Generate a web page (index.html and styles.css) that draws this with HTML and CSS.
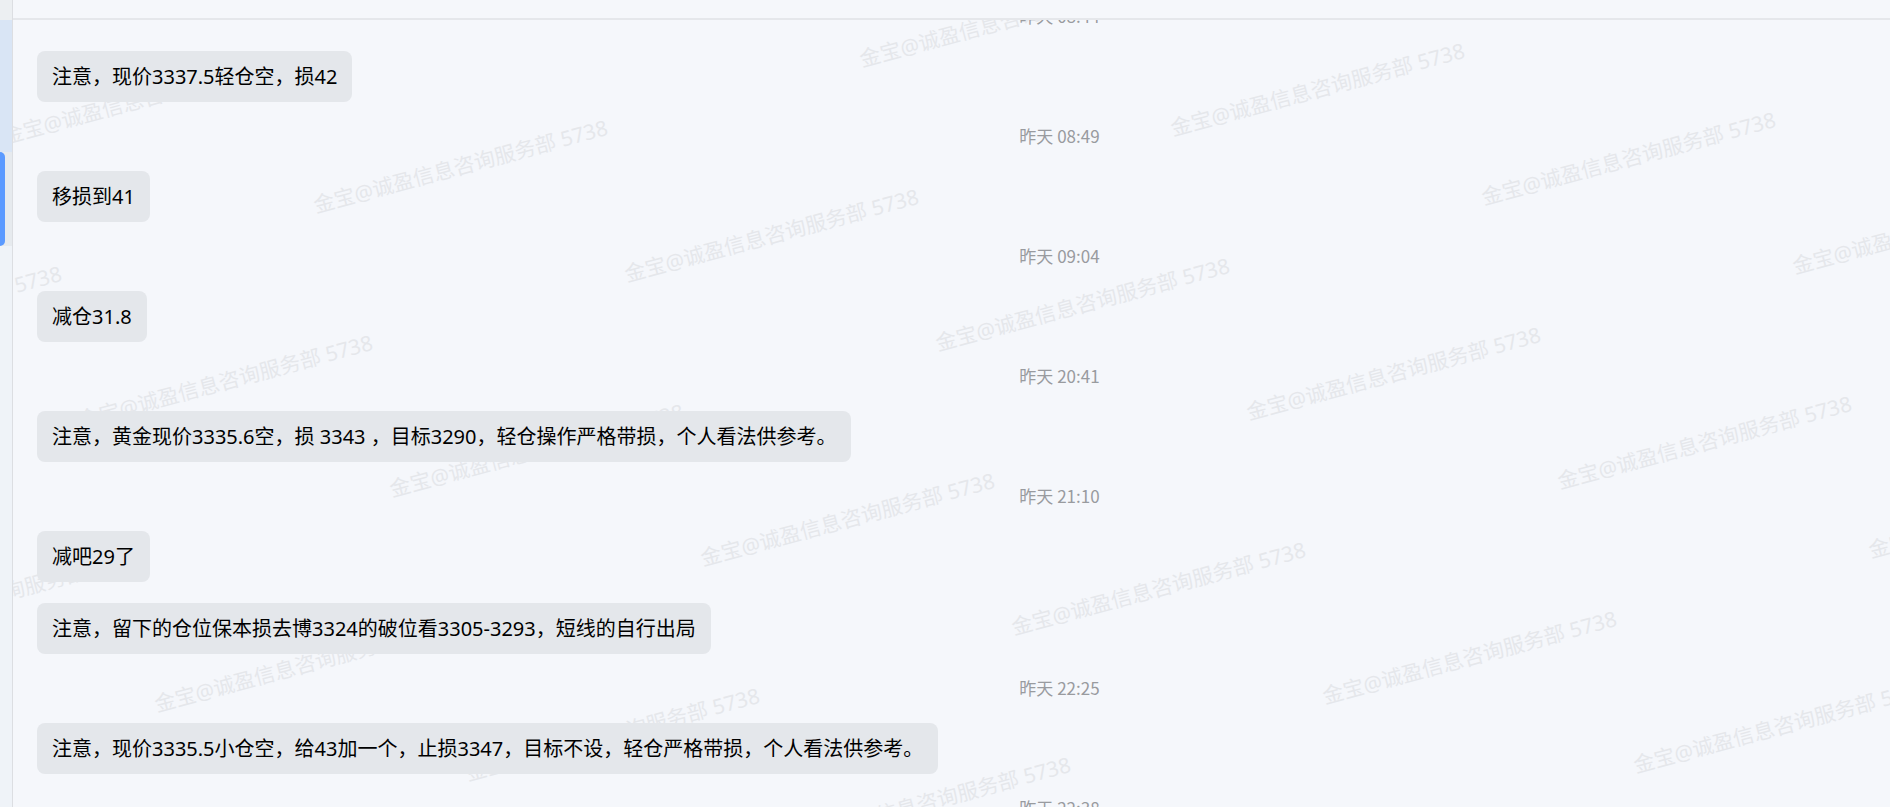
FILE: index.html
```html
<!DOCTYPE html>
<html lang="zh-CN">
<head>
    <meta charset="UTF-8">
    <meta name="viewport" content="width=device-width, initial-scale=1.0">
    <title>聊天记录</title>
    <link rel="stylesheet" href="styles.css">
</head>
<body>

    <aside class="sidebar">
        <div class="side-top"></div>
        <div class="side-active"></div>
        <div class="side-item">
            <div class="side-mark"></div>
        </div>
    </aside>

    <main class="chat">
        <header class="chat-header"></header>

        <section class="chat-body">
            <!-- Watermark behind the messages -->
            <svg class="watermark" id="watermark" aria-hidden="true"></svg>

            <div class="messages">
                <time>昨天 08:44</time>
                <p class="bubble">注意，现价3337.5轻仓空，损42</p>
                <time>昨天 08:49</time>
                <p class="bubble">移损到41</p>
                <time>昨天 09:04</time>
                <p class="bubble">减仓31.8</p>
                <time>昨天 20:41</time>
                <p class="bubble">注意，黄金现价3335.6空，损 3343 ，目标3290，轻仓操作严格带损，个人看法供参考。</p>
                <time>昨天 21:10</time>
                <p class="bubble">减吧29了</p>
                <p class="bubble">注意，留下的仓位保本损去博3324的破位看3305-3293，短线的自行出局</p>
                <time>昨天 22:25</time>
                <p class="bubble">注意，现价3335.5小仓空，给43加一个，止损3347，目标不设，轻仓严格带损，个人看法供参考。</p>
                <time>昨天 22:38</time>
            </div>
        </section>
    </main>

    <script src="watermark.js"></script>
</body>
</html>
```
FILE: watermark.js
```js
const watermark = document.getElementById("watermark");
const label = "金宝@诚盈信息咨询服务部 5738";
const area = watermark.getBoundingClientRect();

// Each row starts further right and lower, and steps down along the row
for (let row = 0; row < 4; row++) {
    for (let col = -3; col < 7; col++) {
        const x = -84 + row * 76 + col * 311;
        const y = -160 + row * 284 + col * 69;

        // Skip labels that fall outside the chat
        if (x < -290 || x > area.width || y < 10 || y > area.height + 80) {
            continue;
        }

        const text = document.createElementNS("http://www.w3.org/2000/svg", "text");
        text.setAttribute("transform", `translate(${x} ${y}) rotate(-15)`);
        text.textContent = label;
        watermark.appendChild(text);
    }
}
```
FILE: styles.css
```css
* {
    box-sizing: border-box;
}
body {
    display: flex;
    height: 100vh;
    margin: 0;
    overflow: hidden;
    background-color: #f5f7fb;
    font-family: "Noto Sans", "Noto Sans CJK SC", sans-serif;
}
.sidebar {
    flex: none;
    width: 13px;
    background-color: #eff3f8;
    border-right: 1px solid #dcdee2;
}
.side-top {
    height: 20px;
    background-color: #eceff2;
}
.side-active {
    height: 132px;
    background-color: #d9e5f5;
}
.side-item {
    height: 94px;
    background-color: #e6eaee;
}
.side-mark {
    width: 5px;
    height: 94px;
    background-color: #5b9aff;
    border-radius: 0 5px 5px 0;
}
.chat {
    flex: 1;
    display: flex;
    flex-direction: column;
    min-width: 0;
}
.chat-header {
    flex: none;
    height: 20px;
    border-bottom: 2px solid #e5e7eb;
}
.chat-body {
    flex: 1;
    position: relative;
    min-height: 0;
    overflow: hidden;
}
.watermark {
    position: absolute;
    top: 0;
    left: 0;
    width: 100%;
    height: 100%;
    fill: #e5e7eb;
    font-size: 21px;
}
.messages {
    position: relative;
    display: flex;
    flex-direction: column;
    align-items: flex-start;
    gap: 21px;
    margin-top: -17px;
    padding-left: 24px;
}
.messages time {
    align-self: stretch;
    padding: 0 0 2px 192px;
    color: #999b9f;
    font-family: "Noto Sans CJK SC", sans-serif;
    font-size: 17px;
    line-height: 25px;
    text-align: center;
}
.bubble {
    margin: 0;
    padding: 12px 15px;
    background-color: #e4e7eb;
    border-radius: 8px;
    color: #000;
    font-size: 20px;
    line-height: 27px;
}
```
